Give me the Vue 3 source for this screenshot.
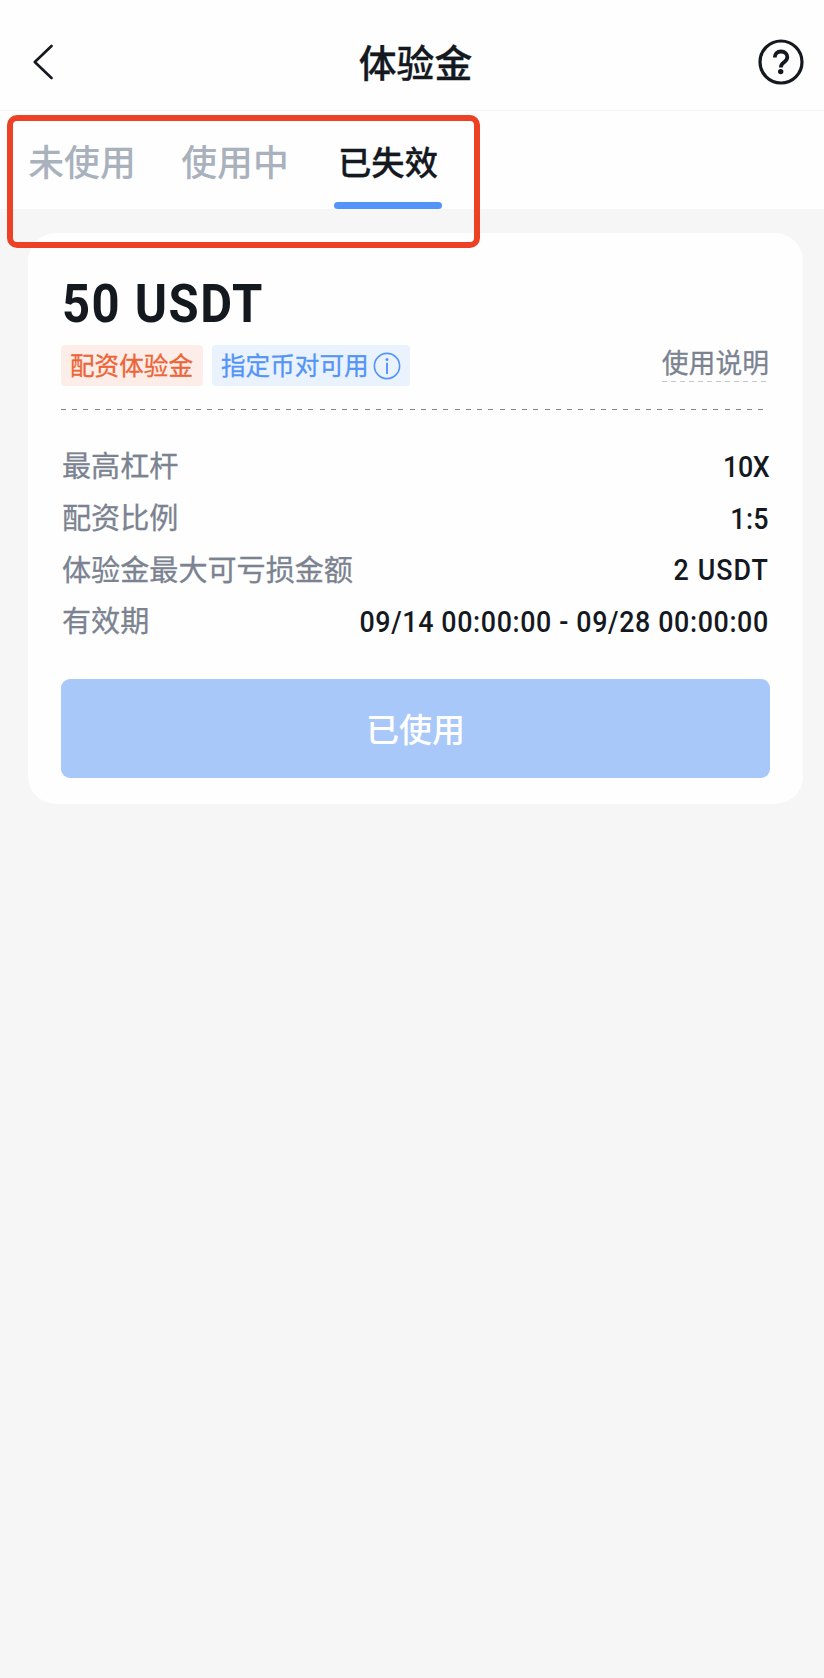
<template>
  <div class="page">
    <!-- Top bar -->
    <header class="header">
      <svg class="back" width="22" height="38" viewBox="0 0 22 38" fill="none">
        <path d="M18.5 3 L1.8 19 L18.5 35" stroke="#14181f" stroke-width="2.6" stroke-linecap="round" stroke-linejoin="round" />
      </svg>
      <h1>体验金</h1>
      <svg class="help" width="46" height="46" viewBox="0 0 46 46" fill="none">
        <circle cx="23" cy="23" r="21" stroke="#14181f" stroke-width="3.2" />
        <path d="M16.8 18.6 C16.8 14.8 19.2 12.5 23 12.5 C26.8 12.5 29.3 14.8 29.3 18 C29.3 20.4 28.2 21.6 26.2 23.2 C23.8 25 22.9 25.6 22.9 28.4" stroke="#14181f" stroke-width="3.8" />
        <circle cx="22.7" cy="32.6" r="2.7" fill="#14181f" />
      </svg>
    </header>

    <!-- Status tabs -->
    <nav class="tabs">
      <button
        v-for="tab in tabs"
        :key="tab"
        class="tab"
        :class="{ active: tab === current }"
        @click="current = tab"
      >{{ tab }}</button>
      <div class="marker"></div>
    </nav>

    <!-- Bonus card -->
    <section class="card">
      <h2>50 USDT</h2>
      <div class="tags">
        <span class="tag orange">配资体验金</span>
        <span class="tag blue">
          <span>指定币对可用</span>
          <svg width="28" height="28" viewBox="0 0 28 28" fill="none">
            <circle cx="14" cy="14" r="12.6" stroke="#5294f8" stroke-width="1.6" />
            <circle cx="14" cy="7.6" r="1.5" fill="#5294f8" />
            <path d="M14 11.4 V21.2" stroke="#5294f8" stroke-width="1.9" stroke-linecap="round" />
          </svg>
        </span>
        <a class="usage">使用说明</a>
      </div>
      <div class="divider"></div>

      <div v-for="row in rows" :key="row.label" class="row">
        <span class="label">{{ row.label }}</span>
        <span class="value" :class="row.type">{{ row.value }}</span>
      </div>

      <button class="used" disabled>已使用</button>
    </section>
  </div>
</template>

<script setup>
import { ref } from 'vue'

const tabs = ['未使用', '使用中', '已失效']
const current = ref('已失效')

const rows = [
  { label: '最高杠杆', value: '10X', type: 'lever' },
  { label: '配资比例', value: '1:5', type: 'ratio' },
  { label: '体验金最大可亏损金额', value: '2 USDT', type: 'amount' },
  { label: '有效期', value: '09/14 00:00:00 - 09/28 00:00:00', type: 'period' }
]
</script>

<style>
body {
  margin: 0;
  background: #f6f6f6;
}
</style>

<style scoped>
.page {
  min-height: 1678px;
  background: #f6f6f6;
  color: #14181f;
  font-family: Roboto, "Noto Sans CJK SC", sans-serif;
}

button {
  border: 0;
  padding: 0;
  background: none;
  font-family: inherit;
}

.header {
  display: flex;
  align-items: center;
  justify-content: space-between;
  box-sizing: border-box;
  height: 111px;
  padding: 13px 20px 0 33px;
  background: #fefefe;
  border-bottom: 1px solid #f2f2f3;
}

.back {
  margin-right: 16px;
}

h1 {
  margin: 5px 0 0 2px;
  font-size: 37.8px;
  font-weight: 500;
  line-height: 50px;
  -webkit-text-stroke: 0.3px currentColor;
}

.tabs {
  position: relative;
  display: flex;
  gap: 45px;
  height: 98px;
  padding-left: 28px;
  background: #fefefe;
}

.tab {
  position: relative;
  width: 108px;
  color: #a9b1bc;
  font-size: 35.8px;
  font-weight: 500;
  white-space: nowrap;
}

.tab.active {
  color: #14181f;
  font-size: 33.3px;
  -webkit-text-stroke: 0.3px currentColor;
}

.tab.active::after {
  content: "";
  position: absolute;
  left: 0;
  bottom: 0;
  width: 108px;
  height: 7px;
  border-radius: 4px;
  background: #5294f8;
}

/* red frame drawn around the tabs */
.marker {
  position: absolute;
  z-index: 1;
  left: 7px;
  top: 4px;
  box-sizing: border-box;
  width: 473px;
  height: 133px;
  border: 6px solid #ec4125;
  border-radius: 10px;
}

.card {
  box-sizing: border-box;
  width: 775px;
  height: 571px;
  margin: 24px 0 0 28px;
  padding: 43px 33px 0;
  border-radius: 28px;
  background: #fefefe;
}

/* latin text is squeezed a little to get narrow DIN-like figures */
h2 {
  margin: 0;
  padding-left: 1px;
  font-size: 54.4px;
  font-weight: 700;
  line-height: 56px;
  letter-spacing: 1.7px;
  transform: scaleX(0.9);
  transform-origin: left;
}

.tags {
  display: flex;
  align-items: center;
  margin-top: 13px;
}

.tag {
  display: flex;
  align-items: center;
  box-sizing: border-box;
  height: 41px;
  border-radius: 4px;
  font-size: 24.6px;
  line-height: 39px;
  padding-top: 2px;
  -webkit-text-stroke: 0.3px currentColor;
}

.tag svg {
  margin-top: -2px;
}

.orange {
  width: 142px;
  padding-left: 9px;
  margin-right: 9px;
  color: #ec6437;
  background: #fcede8;
}

.blue {
  width: 198px;
  padding-left: 9px;
  gap: 4px;
  color: #5294f8;
  background: #eaf2fe;
}

.usage {
  margin: -3px 1px 0 auto;
  color: #7b8390;
  font-size: 26.8px;
  line-height: 35px;
  background: repeating-linear-gradient(90deg, #c4c8ce 0 5px, transparent 5px 9px) left bottom / 100% 1px no-repeat;
  -webkit-text-stroke: 0.3px currentColor;
}

.divider {
  height: 1px;
  margin: 23px 6px 31px 0;
  background: repeating-linear-gradient(90deg, #7f8692 0 5px, transparent 5px 11.25px);
}

.row {
  display: flex;
  align-items: center;
  justify-content: space-between;
  height: 51.7px;
}

.label {
  padding: 0 0 5px 1px;
  color: #7b8390;
  font-size: 29.1px;
  -webkit-text-stroke: 0.3px currentColor;
}

.value {
  margin: -1px 1px 0 0;
  font-size: 29.8px;
  font-weight: 500;
  white-space: nowrap;
  transform: scaleX(0.9);
  transform-origin: right;
}

.lever {
  letter-spacing: -0.5px;
}

.ratio {
  letter-spacing: 0.4px;
}

.amount {
  letter-spacing: 1.2px;
}

.period {
  letter-spacing: 0.7px;
}

.used {
  display: block;
  width: 709px;
  height: 99px;
  margin-top: 31px;
  border-radius: 9px;
  background: #a7c8f9;
  color: #fff;
  font-size: 33px;
  font-weight: 500;
}
</style>
